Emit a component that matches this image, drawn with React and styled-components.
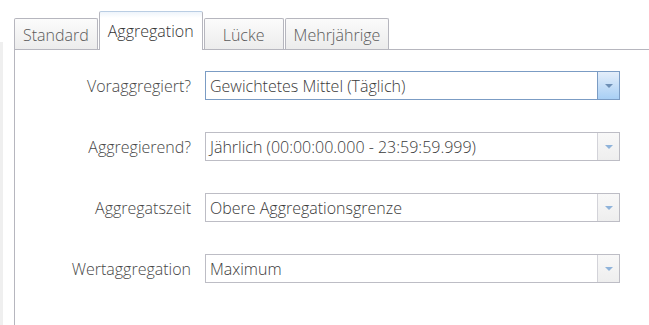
import React from "react";
import styled, { createGlobalStyle } from "styled-components";

const colors = {
  line: "#b6b6be",
  text: "#3a3a3a",
  label: "#474747",
  tabText: "#5a5a5a",
  focus: "#7b9cc4",
};

const tabs = ["Standard", "Aggregation", "Lücke", "Mehrjährige"];

const fields = [
  { label: "Voraggregiert?", value: "Gewichtetes Mittel (Täglich)", focused: true },
  { label: "Aggregierend?", value: "Jährlich (00:00:00.000 - 23:59:59.999)" },
  { label: "Aggregatszeit", value: "Obere Aggregationsgrenze" },
  { label: "Wertaggregation", value: "Maximum" },
];

const GlobalStyle = createGlobalStyle`
  html, body {
    margin: 0;
    padding: 0;
    background: #ffffff;
  }

  body {
    font-family: "Open Sans", "DejaVu Sans", sans-serif;
    overflow: hidden;
  }
`;

const App = () => {
  return (
    <>
      <GlobalStyle />
      <Page>
        <EdgeStrip />
        <Main>
          <TabBar>
            {tabs.map((tab, index) => (
              <Tab key={index} active={index === 1}>
                {tab}
              </Tab>
            ))}
          </TabBar>
          <Panel>
            <Form>
              {fields.map((field, index) => (
                <React.Fragment key={index}>
                  <Label>{field.label}</Label>
                  <Select focused={field.focused}>
                    <SelectText>{field.value}</SelectText>
                    <DropButton focused={field.focused}>
                      <Arrow focused={field.focused} />
                    </DropButton>
                  </Select>
                </React.Fragment>
              ))}
            </Form>
          </Panel>
        </Main>
      </Page>
    </>
  );
};

const Page = styled.div`
  display: flex;
  width: 649px;
  height: 325px;
`;

const EdgeStrip = styled.div`
  width: 3px;
  margin-top: 42px;
  background: #efefef;
`;

const Main = styled.div`
  flex: 1;
  display: flex;
  flex-direction: column;
  padding: 11px 0 0 11px;
`;

const TabBar = styled.div`
  display: flex;
  align-items: flex-end;
  gap: 1px;
  height: 38px;
  border-bottom: 1px solid ${colors.line};
`;

const Tab = styled.div`
  box-sizing: border-box;
  min-width: 80px;
  height: ${({ active }) => (active ? "39px" : "31px")};
  margin-bottom: ${({ active }) => (active ? "-1px" : "0")};
  padding: ${({ active }) => (active ? "0 8px 0" : "1px 8px 0")};
  display: flex;
  align-items: center;
  justify-content: center;
  border: 1px solid ${colors.line};
  border-top-color: ${({ active }) => (active ? "#b9cde3" : colors.line)};
  border-bottom: none;
  border-radius: 2px 2px 0 0;
  background: ${({ active }) =>
    active
      ? "linear-gradient(#eef4fb, #ffffff 6px)"
      : "linear-gradient(#fbfbfb, #ececec)"};
  color: ${({ active }) => (active ? "#333" : colors.tabText)};
  font-size: 16px;
  font-weight: 300;
  line-height: 1;
  white-space: nowrap;
`;

const Panel = styled.div`
  flex: 1;
  border-left: 1px solid ${colors.line};
`;

const Form = styled.div`
  display: grid;
  grid-template-columns: 176px 415px;
  column-gap: 14px;
  row-gap: 32px;
  align-items: center;
  padding-top: 21px;
`;

const Label = styled.div`
  text-align: right;
  font-size: 16px;
  font-weight: 300;
  color: ${colors.label};
  white-space: nowrap;
`;

const Select = styled.div`
  box-sizing: border-box;
  height: 29px;
  display: flex;
  align-items: stretch;
  border: 1px solid ${({ focused }) => (focused ? colors.focus : "#bdbdc5")};
  background: #ffffff;
`;

const SelectText = styled.div`
  flex: 1;
  display: flex;
  align-items: center;
  padding-left: 4px;
  font-size: 16px;
  font-weight: 300;
  color: ${colors.text};
  white-space: nowrap;
  overflow: hidden;
`;

const DropButton = styled.div`
  width: 21px;
  display: flex;
  align-items: center;
  justify-content: center;
  border-left: 1px solid ${({ focused }) => (focused ? colors.focus : "#d3d3d9")};
  background: ${({ focused }) =>
    focused
      ? "linear-gradient(#e4eefa, #a8cff5)"
      : "linear-gradient(#f8f8f8, #eeeeee)"};
`;

const Arrow = styled.div`
  width: 0;
  height: 0;
  border-left: 4px solid transparent;
  border-right: 4px solid transparent;
  border-top: 4px solid ${({ focused }) => (focused ? "#6e8fb5" : "#8fb3da")};
`;

export default App;
